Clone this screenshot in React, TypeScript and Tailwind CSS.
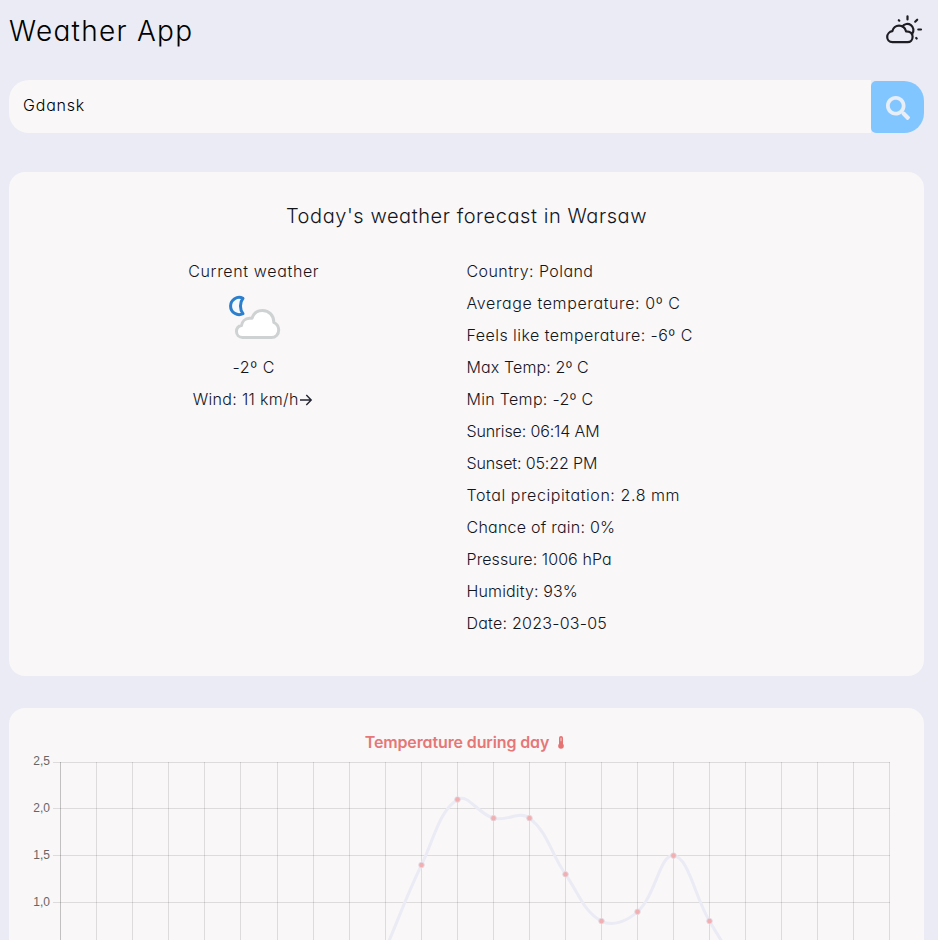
import React from "react";
import { FaSearch } from "react-icons/fa";

const details: { text: string; tracking: string }[] = [
  { text: "Country: Poland", tracking: "tracking-[0.42px]" },
  { text: "Average temperature: 0º C", tracking: "tracking-[0.61px]" },
  { text: "Feels like temperature: -6º C", tracking: "tracking-[0.46px]" },
  { text: "Max Temp: 2º C", tracking: "tracking-[0.12px]" },
  { text: "Min Temp: -2º C", tracking: "tracking-[0.31px]" },
  { text: "Sunrise: 06:14 AM", tracking: "tracking-[-0.13px]" },
  { text: "Sunset: 05:22 PM", tracking: "tracking-[-0.13px]" },
  { text: "Total precipitation: 2.8 mm", tracking: "tracking-[0.57px]" },
  { text: "Chance of rain: 0%", tracking: "tracking-[0.24px]" },
  { text: "Pressure: 1006 hPa", tracking: "tracking-[0.08px]" },
  { text: "Humidity: 93%", tracking: "tracking-[0.14px]" },
  { text: "Date: 2023-03-05", tracking: "tracking-[0.24px]" },
];

function CloudSunIcon() {
  return (
    <svg
      width="38"
      height="32"
      viewBox="885 14 38 32"
      fill="none"
      stroke="#1f1d24"
      strokeWidth="2.2"
      strokeLinecap="round"
      strokeLinejoin="round"
    >
      <path d="M892.5 42.2C889 42.2 887.2 39.6 887.2 37C887.2 34 889.5 31.6 892.3 31.2C893 27.7 896 25.6 899 25.6C902.3 25.6 905.2 27.9 906 31.3C910 31.3 912.6 33.4 912.6 36.8C912.6 40 910.5 42.2 907.5 42.2Z" />
      <path d="M902.3 26.4A6 6 0 1 1 912.2 33.8" />
      <path d="M907.5 16.3V19.4M915.2 21.7L917.2 19.7M918.3 29.5H921M916.2 38L916.7 38.5M898.8 20.2L899.3 20.7" />
    </svg>
  );
}

function CloudyNightIcon() {
  return (
    <svg width="64" height="64" viewBox="0 -2 64 64" strokeWidth="3">
      <path
        d="M21 8.3A8.6 8.6 0 1 0 21 23.7C17.6 19.5 17.6 12.5 21 8.3Z"
        fill="#f4f9fd"
        stroke="#2b7fcc"
        strokeLinejoin="round"
      />
      <path
        d="M20.5 47.5C17 47.5 14.5 45 14.5 41.5C14.5 38.5 16.5 36 19.5 35.5C20 31.5 23 28.5 27.5 28.3L30 28.3C31.5 23.5 35.5 20.5 40.5 20.5C47 20.5 52 25.5 51.8 32.5C55 34 56.7 37 56.7 40C56.7 44.5 53.5 47.5 49.5 47.5Z"
        fill="#ffffff"
        stroke="#cfd2d3"
        strokeLinejoin="round"
      />
    </svg>
  );
}

function ArrowIcon() {
  return (
    <svg
      width="14"
      height="14"
      viewBox="0 0 14 14"
      fill="none"
      stroke="#22242f"
      strokeWidth="1.4"
      className="mt-px"
    >
      <path d="M1 7H12M7.3 2L12.2 7L7.3 12" />
    </svg>
  );
}

function ThermometerIcon() {
  return (
    <svg width="6" height="13" viewBox="0 0 6 13">
      <rect x="1" y="0" width="4" height="10" rx="2" fill="#e57373" />
      <circle cx="3" cy="10" r="2.8" fill="#e57373" />
      <rect x="2.5" y="1.8" width="1" height="3.4" fill="#f6cfd0" />
    </svg>
  );
}

const Y_TICKS = [
  { label: "2,5", y: 54.5, baseline: 57 },
  { label: "2,0", y: 100.5, baseline: 103.7 },
  { label: "1,5", y: 147.5, baseline: 150.7 },
  { label: "1,0", y: 194.5, baseline: 197.7 },
];

const hourX = (i: number) => 51.5 + 36 * i + (i > 5 ? 1 : 0);
const tempY = (t: number) => 54 + (2.5 - t) * 93.6;

const FIRST_HOUR = 8;
const temps = [-0.4, 0.5, 1.4, 2.1, 1.9, 1.9, 1.3, 0.8, 0.9, 1.5, 0.8, 0.2, -0.3];
const points = temps.map((t, i) => ({ x: hourX(FIRST_HOUR + i), y: tempY(t) }));

const TENSION = 0.4;

// Control points weighted by the distance to each neighbour.
function splinePath(pts: { x: number; y: number }[]) {
  const controls = pts.map((p, i) => {
    const prev = pts[i - 1] ?? p;
    const next = pts[i + 1] ?? p;
    const d1 = Math.hypot(p.x - prev.x, p.y - prev.y);
    const d2 = Math.hypot(next.x - p.x, next.y - p.y);
    const a = (TENSION * d1) / (d1 + d2);
    const b = (TENSION * d2) / (d1 + d2);
    const dx = next.x - prev.x;
    const dy = next.y - prev.y;
    return { before: [p.x - a * dx, p.y - a * dy], after: [p.x + b * dx, p.y + b * dy] };
  });
  return pts
    .map((p, i) =>
      i === 0
        ? `M${p.x} ${p.y}`
        : `C${controls[i - 1].after.join(" ")} ${controls[i].before.join(" ")} ${p.x} ${p.y}`,
    )
    .join("");
}

function TemperatureChart() {
  return (
    <svg width="915" height="240" viewBox="0 42 915 240" className="block">
      <g stroke="#000000">
        {Y_TICKS.map((t) => (
          <path key={t.label} d={`M44 ${t.y}H881`} strokeOpacity="0.11" />
        ))}
        {Array.from({ length: 24 }, (_, i) => (
          <path key={i} d={`M${hourX(i)} 54V282`} strokeOpacity={i === 0 ? 0.22 : 0.11} />
        ))}
      </g>
      <g
        className="font-['Liberation_Sans',Arial,sans-serif] text-[12px] font-normal"
        fill="#666666"
        textAnchor="end"
      >
        {Y_TICKS.map((t) => (
          <text key={t.label} x="41" y={t.baseline}>
            {t.label}
          </text>
        ))}
      </g>
      <path d={splinePath(points)} fill="none" stroke="#eaebf4" strokeWidth="3" />
      {points.map((p) => (
        <circle
          key={p.x}
          cx={p.x}
          cy={p.y}
          r="2.8"
          fill="#f0b0b3"
          stroke="#e2dfe6"
          strokeOpacity="0.8"
        />
      ))}
    </svg>
  );
}

export default function App() {
  return (
    <div className="h-[940px] overflow-hidden bg-[#eaebf4] pr-[14px] pl-[9px] font-['Inter','Noto_Sans',sans-serif] text-base font-light text-[#13151d] [font-feature-settings:'cv11']">
      <header className="flex h-20 items-start justify-between">
        <h1 className="mt-[11px] text-[28px] leading-10 tracking-[1.28px] text-black">
          Weather App
        </h1>
        <div className="mt-[14px] mr-px">
          <CloudSunIcon />
        </div>
      </header>

      <form className="flex h-[53px]">
        <div className="flex flex-1 items-center rounded-l-[20px] bg-[#f9f7f8] px-[14px] pb-[4px] tracking-[0.8px] text-black">
          Gdansk
        </div>
        <button
          type="button"
          aria-label="Search"
          className="mt-px flex w-[53px] items-center justify-center rounded-l-[5px] rounded-r-[20px] bg-[#82c6ff] pt-[2px] text-[#e8eef8]"
        >
          <FaSearch size={24} />
        </button>
      </form>

      <section className="mt-[39px] h-[504px] rounded-2xl bg-[#f9f7f8] px-8 pt-[30px]">
        <h2 className="text-center text-[20px] leading-7 tracking-[0.57px]">
          Today's weather forecast in Warsaw
        </h2>
        <div className="mt-[25px] grid grid-cols-2">
          <div className="flex flex-col items-center leading-8">
            <p className="tracking-[0.65px]">Current weather</p>
            <span className="-mb-px pt-px">
              <CloudyNightIcon />
            </span>
            <p className="tracking-[0.55px]">-2º C</p>
            <p className="mr-[2px] flex items-center">
              <span className="tracking-[0.33px]">Wind: 11 km/h</span>
              <ArrowIcon />
            </p>
          </div>
          <ul className="leading-8">
            {details.map((d) => (
              <li key={d.text} className={d.tracking}>
                {d.text}
              </li>
            ))}
          </ul>
        </div>
      </section>

      <section className="mt-8 rounded-t-2xl bg-[#f9f7f8]">
        <div className="flex h-[42px] items-end justify-center gap-[9px] pr-[4px] text-[#e57777]">
          <span className="mb-[-4px] leading-6 font-semibold tracking-[-0.12px]">
            Temperature during day
          </span>
          <span className="mb-px flex">
            <ThermometerIcon />
          </span>
        </div>
        <TemperatureChart />
      </section>
    </div>
  );
}
